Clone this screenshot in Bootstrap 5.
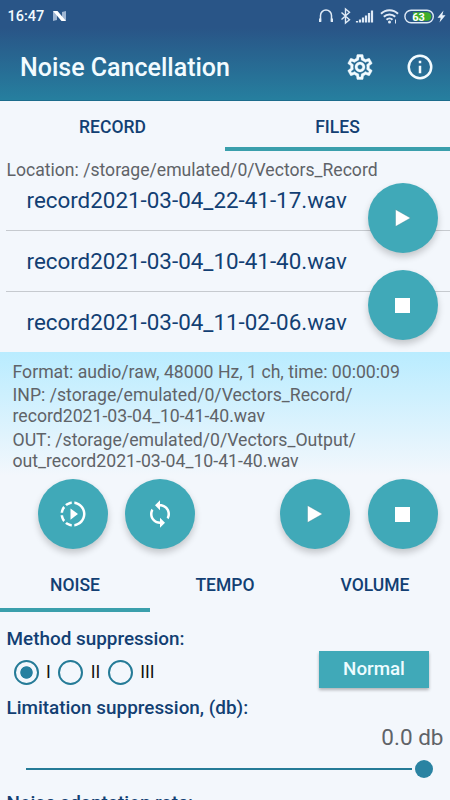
<!DOCTYPE html>
<html lang="en">
<head>
<meta charset="utf-8">
<meta name="viewport" content="width=device-width, initial-scale=1">
<title>Noise Cancellation</title>
<link rel="stylesheet" href="https://cdn.jsdelivr.net/npm/bootstrap@5.3.0/dist/css/bootstrap.min.css">
<style>
  body { font-family: Roboto, "Liberation Sans", sans-serif; background: #f3f7fc; color: #5f6368; }
  .screen { width: 450px; height: 800px; }
  .app-top { height: 101px; background: linear-gradient(#295587 0, #295587 28px, #267f9f 100%); color: #f2fbff; border-bottom: 1px solid #1b6c8c; }
  .status { height: 32px; padding: 0 4px 0 7.5px; font-size: 14.5px; font-weight: 500; line-height: 32px; }
  .status span { padding-top: 1px; }
  .title-bar { height: 69px; padding: 0 15px 0 20px; gap: 30px; }
  .title-bar h1 { font-size: 25px; font-weight: 500; line-height: 66px; padding-top: 3px; }
  .tab-strip .nav-link { border-radius: 0; color: #123f73; font-size: 17.5px; font-weight: 500; border-bottom: 4px solid transparent; padding: 0; }
  .tab-strip .nav-link.active { border-color: #3a9fac; color: #123f73; background: none; }
  .tabs-main .nav-link { height: 50px; line-height: 52px; }
  .tabs-sub .nav-link { height: 52px; line-height: 51px; }
  .location { height: 20px; line-height: 39px; font-size: 17.6px; padding-left: 6.5px; white-space: nowrap; }
  .files { height: 181px; padding-left: 6px; }
  .files .list-group { margin-top: -1px; }
  .files .list-group-item { height: 61px; padding: 0 0 0 20.5px; line-height: 61px; font-size: 22.4px; color: #123f73; background: none; border-color: #c6cacf; white-space: nowrap; }
  .file-actions { right: 12.5px; top: 31.5px; gap: 17.5px; }
  .fab { width: 70px; height: 70px; padding: 0; background: #40a9b8; color: #fff; border: 0; box-shadow: 0 4px 7px rgba(0,0,0,.2); }
  .info { height: 124px; padding: 9.5px 12.5px 0; background: linear-gradient(#b9ecff, #f3f7fc); font-size: 17.66px; line-height: 20.8px; white-space: nowrap; }
  .info p { margin: 0 0 3px; }
  .transport { height: 84px; padding: 3px 12.5px 0 37.5px; gap: 17.5px; }
  .sect { color: #123f73; font-size: 18.9px; font-weight: 500; line-height: 24px; padding-left: 6.5px; white-space: nowrap; }
  .sect-first { padding-top: 14.5px; }
  .methods { height: 45.5px; padding: 0 21px 1.5px 13.5px; gap: 7.5px; }
  .methods .form-check-input { width: 25px; height: 25px; margin: 0; float: none; background: none; border: 2.5px solid #257b97; }
  .methods .form-check-input:checked { background: radial-gradient(circle, #257f9f 0 5.8px, transparent 6.6px); border-color: #257b97; }
  .methods label { color: #111; font-size: 17.5px; line-height: 25px; }
  .btn-mode { width: 110px; height: 37px; padding: 0; margin-top: -6px; border: 0; border-radius: 0; background: #40a9b8; color: #eefcff; font-size: 18.75px; font-weight: 500; box-shadow: 0 2px 3px rgba(0,0,0,.28); }
  .level { font-size: 22.5px; line-height: 34px; height: 34px; padding-right: 6.5px; }
  .slide { height: 30px; padding: 0 17.5px 0 26px; gap: 3px; margin-bottom: 6.5px; }
  .slide-track { height: 2.5px; background: #257b97; }
  .slide-thumb { width: 18px; height: 18px; background: #2a83a2; }
</style>
<script src="https://cdn.jsdelivr.net/npm/bootstrap@5.3.0/dist/js/bootstrap.bundle.min.js"></script>
</head>
<body>
<div class="screen overflow-hidden">
  <header class="app-top">
    <div class="status d-flex align-items-center">
      <span>16:47</span>
      <svg class="ms-2" width="15" height="12" viewBox="0 0 15 12"><path d="M1 1v10l4-1V3zM14 1v10l-4-2V2z" fill="#9fb6d2"/><path d="M1 1h4.500l8.500 10h-4.500z" fill="#fff"/></svg>
      <svg class="ms-auto" width="130" height="18" viewBox="0 0 130 18" fill="none" stroke="#dfeaf6">
        <path d="M4.500 14.500V8.500a5.500 5.500 0 0 1 11 0v6" stroke-width="1.500"/>
        <path d="M4.100 11.500v3.500M15.900 11.500v3.500" stroke-width="2.200"/>
        <path d="M25.500 5.500l8 7.200-4 3.300V2l4 3.300-8 7.200" stroke-width="1.400"/>
        <path d="M41 15.500v-1.500M44 15.500v-3M47 15.500v-5M50 15.500V8.500M53 15.500V6M56 15.500V3.500" stroke-width="2.200"/>
        <path d="M65 6.800a12 12 0 0 1 17 0M67.800 9.800a8 8 0 0 1 11.400 0M70.500 12.700a4.300 4.300 0 0 1 6 0" stroke-width="2"/>
        <circle cx="73.500" cy="15" r="1.500" fill="#dfeaf6" stroke="none"/><path d="M79.500 12.500v4" stroke-width="1"/>
        <rect x="88.900" y="3.200" width="28.400" height="12.600" rx="6.300" stroke-width="1.400"/>
        <path d="M97 5.200h14a4.300 4.300 0 0 1 0 8.600H97z" fill="#3fae2a" stroke="none"/>
        <text x="102.500" y="13.500" text-anchor="middle" font-size="11" font-weight="700" fill="#fff" stroke="none">63</text>
        <path d="M127.500 3.500l-6 7.300h3.200l-1.200 4.700 6-7.300h-3.200z" fill="#e9f2fb" stroke="none"/>
      </svg>
    </div>
    <div class="title-bar d-flex align-items-center">
      <h1 class="m-0 me-auto">Noise Cancellation</h1>
      <svg class="flex-shrink-0" width="30" height="30" viewBox="0 0 24 24" fill="#f2fbff"><path d="M19.430 12.980c.04-.32.07-.64.07-.98s-.03-.66-.07-.98l2.110-1.650c.19-.15.24-.42.12-.64l-2-3.460c-.09-.16-.26-.25-.44-.25-.06 0-.12.010-.17.030l-2.490 1c-.52-.4-1.080-.73-1.690-.98l-.38-2.650C14.460 2.180 14.250 2 14 2h-4c-.25 0-.46.18-.49.42l-.38 2.650c-.61.25-1.170.59-1.690.98l-2.490-1c-.06-.02-.12-.03-.18-.03-.17 0-.34.09-.43.25l-2 3.460c-.13.22-.07.49.12.64l2.110 1.650c-.04.32-.07.65-.07.98s.03.66.07.98l-2.110 1.650c-.19.15-.24.42-.12.64l2 3.460c.09.16.26.25.44.25.06 0 .12-.01.17-.03l2.490-1c.52.4 1.080.73 1.690.98l.38 2.650c.03.24.24.42.49.42h4c.25 0 .46-.18.49-.42l.38-2.650c.61-.25 1.170-.59 1.690-.98l2.490 1c.06.02.12.03.18.03.17 0 .34-.09.43-.25l2-3.460c.12-.22.07-.49-.12-.64l-2.110-1.650zm-1.980-1.710c.04.31.05.52.05.73s-.02.43-.05.73l-.14 1.130.89.7 1.080.84-.7 1.210-1.270-.51-1.040-.42-.9.68c-.43.32-.84.56-1.250.73l-1.060.43-.16 1.130-.2 1.350h-1.400l-.19-1.350-.16-1.130-1.060-.43c-.43-.18-.83-.41-1.230-.71l-.91-.7-1.060.43-1.270.51-.7-1.210 1.080-.84.89-.7-.14-1.130c-.03-.31-.05-.54-.05-.74s.02-.43.05-.73l.14-1.130-.89-.7-1.080-.84.7-1.210 1.270.51 1.040.42.9-.68c.43-.32.84-.56 1.250-.73l1.060-.43.16-1.130.2-1.350h1.390l.19 1.350.16 1.130 1.060.43c.43.18.83.41 1.230.71l.91.7 1.060-.43 1.270-.51.7 1.210-1.070.85-.89.7.14 1.130zM12 8c-2.210 0-4 1.790-4 4s1.790 4 4 4 4-1.790 4-4-1.790-4-4-4zm0 6c-1.100 0-2-.9-2-2s.9-2 2-2 2 .9 2 2-.9 2-2 2z" stroke="#f2fbff" stroke-width=".3"/></svg>
      <svg class="flex-shrink-0" width="30" height="30" viewBox="0 0 24 24" fill="#f2fbff"><path d="M11 7h2v2h-2zM11 11h2v6h-2zM12 2a10 10 0 1 0 0 20 10 10 0 0 0 0-20zm0 18a8 8 0 1 1 0-16 8 8 0 0 1 0 16z"/></svg>
    </div>
  </header>

  <nav class="tab-strip tabs-main nav nav-fill flex-nowrap">
    <a class="nav-link w-50" href="#">RECORD</a>
    <a class="nav-link w-50 active" href="#">FILES</a>
  </nav>

  <main>
    <div class="position-relative">
      <div class="location">Location: /storage/emulated/0/Vectors_Record</div>
      <div class="files overflow-hidden">
        <ul class="list-group list-group-flush">
          <li class="list-group-item">record2021-03-04_22-41-17.wav</li>
          <li class="list-group-item">record2021-03-04_10-41-40.wav</li>
          <li class="list-group-item">record2021-03-04_11-02-06.wav</li>
        </ul>
      </div>
      <div class="file-actions position-absolute d-flex flex-column">
        <button class="fab btn rounded-circle d-flex align-items-center justify-content-center" aria-label="Play"><svg width="16" height="18" viewBox="0 0 16 18"><path d="M.5.500L15.500 9 .5 17.500z" fill="#fff" stroke="#2f7f8b" stroke-opacity=".5" stroke-width=".7"/></svg></button>
        <button class="fab btn rounded-circle d-flex align-items-center justify-content-center" aria-label="Stop"><svg width="15" height="15"><rect width="15" height="15" fill="#fff"/></svg></button>
      </div>
    </div>

    <section class="info">
      <p>Format: audio/raw, 48000 Hz, 1 ch, time: 00:00:09</p>
      <p>INP: /storage/emulated/0/Vectors_Record/<br>record2021-03-04_10-41-40.wav</p>
      <p>OUT: /storage/emulated/0/Vectors_Output/<br>out_record2021-03-04_10-41-40.wav</p>
    </section>

    <div class="transport d-flex">
      <button class="fab btn rounded-circle d-flex align-items-center justify-content-center" aria-label="Process"><svg width="30" height="30" viewBox="0 0 24 24" fill="#fff"><path d="M13.050 9.790L10 7.500v9l3.050-2.290L16 12zM11 4.070V2.050c-2.010.2-3.840 1-5.320 2.210L7.100 5.690C8.210 4.830 9.540 4.250 11 4.070zM5.690 7.100L4.260 5.680C3.050 7.160 2.250 8.990 2.050 11h2.020c.18-1.460.76-2.790 1.620-3.900zM4.070 13H2.050c.2 2.010 1 3.840 2.210 5.320l1.430-1.430C4.830 15.790 4.250 14.460 4.070 13zM5.680 19.740C7.160 20.950 9 21.750 11 21.950v-2.020c-1.460-.18-2.790-.76-3.900-1.620zM22 12c0 5.160-3.920 9.420-8.950 9.950v-2.020C16.970 19.410 20 16.050 20 12s-3.030-7.410-6.950-7.930V2.050C18.080 2.580 22 6.840 22 12z"/></svg></button>
      <button class="fab btn rounded-circle d-flex align-items-center justify-content-center" aria-label="Repeat"><svg width="30" height="30" viewBox="0 0 24 24" fill="#fff"><path d="M12 4V1L8 5l4 4V6c3.310 0 6 2.690 6 6 0 1.010-.25 1.970-.7 2.800l1.460 1.460C19.540 15.030 20 13.570 20 12c0-4.420-3.580-8-8-8zm0 14c-3.310 0-6-2.690-6-6 0-1.010.25-1.970.7-2.800L5.240 7.740C4.460 8.970 4 10.430 4 12c0 4.420 3.580 8 8 8v3l4-4-4-4z"/></svg></button>
      <button class="fab btn rounded-circle d-flex align-items-center justify-content-center ms-auto" aria-label="Play output"><svg width="16" height="18" viewBox="0 0 16 18"><path d="M.5.500L15.500 9 .5 17.500z" fill="#fff" stroke="#2f7f8b" stroke-opacity=".5" stroke-width=".7"/></svg></button>
      <button class="fab btn rounded-circle d-flex align-items-center justify-content-center" aria-label="Stop output"><svg width="15" height="15"><rect width="15" height="15" fill="#fff"/></svg></button>
    </div>

    <nav class="tab-strip tabs-sub nav nav-fill flex-nowrap">
      <a class="nav-link w-100 active" href="#">NOISE</a>
      <a class="nav-link w-100" href="#">TEMPO</a>
      <a class="nav-link w-100" href="#">VOLUME</a>
    </nav>

    <section>
      <div class="sect sect-first">Method suppression:</div>
      <div class="methods d-flex align-items-center">
        <input class="form-check-input" type="radio" name="method" id="m1" checked><label for="m1">I</label>
        <input class="form-check-input" type="radio" name="method" id="m2"><label for="m2">II</label>
        <input class="form-check-input" type="radio" name="method" id="m3"><label for="m3">III</label>
        <button class="btn btn-mode ms-auto">Normal</button>
      </div>
      <div class="sect">Limitation suppression, (db):</div>
      <div class="level text-end">0.0 db</div>
      <div class="slide d-flex align-items-center">
        <div class="slide-track flex-grow-1"></div>
        <div class="slide-thumb rounded-circle"></div>
      </div>
      <div class="sect">Noise adaptation rate:</div>
    </section>
  </main>
</div>
</body>
</html>
